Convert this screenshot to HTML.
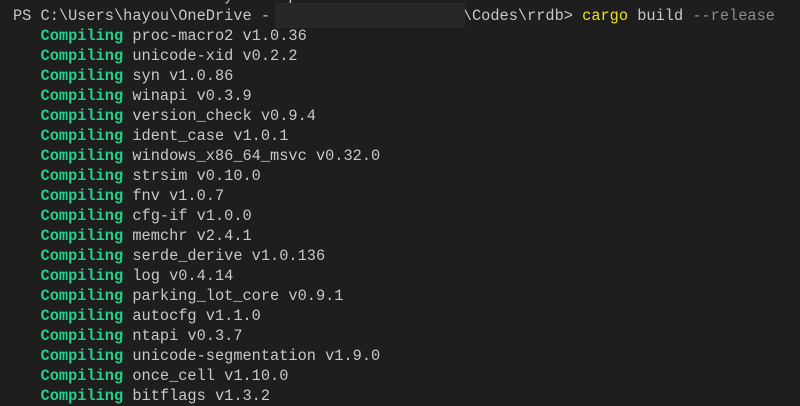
<!DOCTYPE html><html><head><style>
html,body{margin:0;width:800px;height:404px;background:#1e1e1e;overflow:hidden}
pre{position:absolute;left:13px;top:-14px;margin:0;font-family:"Liberation Mono",monospace;font-size:15.3px;line-height:20px;color:#c8c8c8}
b{color:#23d18b}
.y{color:#e5e510}.g{color:#8c8c8c}
.blur{position:absolute;left:275px;top:3px;width:190px;height:25px;background:#272727}
</style></head><body>
<pre>For more information try --help
PS C:\Users\hayou\OneDrive -                     \Codes\rrdb&gt; <span class="y">cargo</span> build <span class="g">--release</span>
   <b>Compiling</b> proc-macro2 v1.0.36
   <b>Compiling</b> unicode-xid v0.2.2
   <b>Compiling</b> syn v1.0.86
   <b>Compiling</b> winapi v0.3.9
   <b>Compiling</b> version_check v0.9.4
   <b>Compiling</b> ident_case v1.0.1
   <b>Compiling</b> windows_x86_64_msvc v0.32.0
   <b>Compiling</b> strsim v0.10.0
   <b>Compiling</b> fnv v1.0.7
   <b>Compiling</b> cfg-if v1.0.0
   <b>Compiling</b> memchr v2.4.1
   <b>Compiling</b> serde_derive v1.0.136
   <b>Compiling</b> log v0.4.14
   <b>Compiling</b> parking_lot_core v0.9.1
   <b>Compiling</b> autocfg v1.1.0
   <b>Compiling</b> ntapi v0.3.7
   <b>Compiling</b> unicode-segmentation v1.9.0
   <b>Compiling</b> once_cell v1.10.0
   <b>Compiling</b> bitflags v1.3.2</pre>
<div class="blur"></div>
</body></html>
